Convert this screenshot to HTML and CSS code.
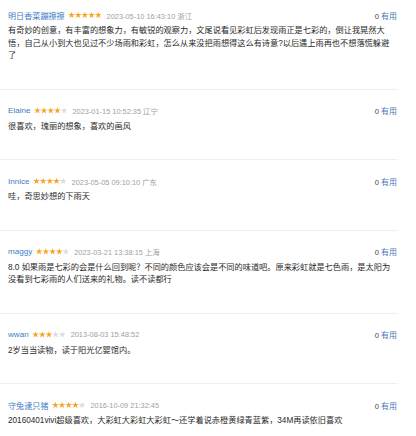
FILE: index.html
```html
<!DOCTYPE html>
<html>
<head>
    <meta charset="utf-8">
    <title>短评</title>
    <link rel="stylesheet" href="styles.css">
</head>
<body>

<div class="comments">
    <div class="comment first">
        <div class="comment-head">
            <span class="user">明日香菜蹦擦擦</span>
            <span class="stars"><i class="on"></i><i class="on"></i><i class="on"></i><i class="on"></i><i class="on"></i></span>
            <span class="meta">2023-05-10 16:43:10 浙江</span>
            <span class="votes">0 <em>有用</em></span>
        </div>
        <p class="comment-text">有奇妙的创意，有丰富的想象力，有敏锐的观察力，文尾说看见彩虹后发现雨正是七彩的，倒让我晃然大悟，自己从小到大也见过不少场雨和彩虹，怎么从来没把雨想得这么有诗意?以后遇上雨再也不想落慌躲避了</p>
    </div>

    <div class="comment">
        <div class="comment-head">
            <span class="user">Elaine</span>
            <span class="stars"><i class="on"></i><i class="on"></i><i class="on"></i><i class="on"></i><i></i></span>
            <span class="meta">2023-01-15 10:52:35 辽宁</span>
            <span class="votes">0 <em>有用</em></span>
        </div>
        <p class="comment-text">很喜欢，瑰丽的想象，喜欢的画风</p>
    </div>

    <div class="comment">
        <div class="comment-head">
            <span class="user">Innice</span>
            <span class="stars"><i class="on"></i><i class="on"></i><i class="on"></i><i class="on"></i><i></i></span>
            <span class="meta">2023-05-05 09:10:10 广东</span>
            <span class="votes">0 <em>有用</em></span>
        </div>
        <p class="comment-text">哇，奇思妙想的下雨天</p>
    </div>

    <div class="comment">
        <div class="comment-head">
            <span class="user">maggy</span>
            <span class="stars"><i class="on"></i><i class="on"></i><i class="on"></i><i class="on"></i><i></i></span>
            <span class="meta">2023-03-21 13:38:15 上海</span>
            <span class="votes">0 <em>有用</em></span>
        </div>
        <p class="comment-text">8.0 如果雨是七彩的会是什么回到呢？不同的颜色应该会是不同的味道吧。原来彩虹就是七色雨，是太阳为没看到七彩雨的人们送来的礼物。读不读都行</p>
    </div>

    <div class="comment">
        <div class="comment-head">
            <span class="user">wwan</span>
            <span class="stars"><i class="on"></i><i class="on"></i><i class="on"></i><i></i><i></i></span>
            <span class="meta">2013-08-03 15:48:52</span>
            <span class="votes">0 <em>有用</em></span>
        </div>
        <p class="comment-text">2岁当当读物，读于阳光亿婴馆内。</p>
    </div>

    <div class="comment">
        <div class="comment-head">
            <span class="user">守兔逮只猪</span>
            <span class="stars"><i class="on"></i><i class="on"></i><i class="on"></i><i class="on"></i><i></i></span>
            <span class="meta">2016-10-09 21:32:45</span>
            <span class="votes">0 <em>有用</em></span>
        </div>
        <p class="comment-text">20160401vivi超级喜欢，大彩虹大彩虹大彩虹～还学着说赤橙黄绿青蓝紫，34M再读依旧喜欢</p>
    </div>
</div>

</body>
</html>
```

FILE: styles.css
```css
* { margin: 0; padding: 0; box-sizing: border-box; }

body {
    font-family: "Liberation Sans", "Noto Sans CJK SC", sans-serif;
    background: #fff;
    color: #333;
}

/* list of short reviews */
.comments {
    width: 397px;
}

.comment {
    padding: 15px 0 26px;
    border-bottom: 1px solid #eeeeee;
}

.comment.first {
    padding-top: 9px;
}

.comment-head {
    display: flex;
    align-items: center;
    height: 12px;
    padding-left: 8px;
    white-space: nowrap;
}

.user {
    font-size: 8.1px;
    color: #3f7cc4;
}

.stars {
    display: flex;
    margin-left: 3.5px;
}

.stars i {
    display: block;
    width: 6.7px;
    height: 6.5px;
    background: #dcdcdc;
    clip-path: polygon(50% 0%, 62% 36%, 100% 36%, 69% 58%, 81% 95%, 50% 72%, 19% 95%, 31% 58%, 0% 36%, 38% 36%);
}

.stars i.on {
    background: #f7a52a;
}

.meta {
    font-size: 7.4px;
    color: #a0a0a0;
    margin-left: 5px;
}

.votes {
    margin-left: auto;
    font-size: 7.6px;
    color: #444;
}

.votes em {
    font-style: normal;
    font-size: 8px;
    color: #4a76b8;
}

.comment-text {
    margin-top: 4px;
    padding: 0 5px 0 8px;
    font-size: 8.2px;
    line-height: 12.5px;
    color: #2a2a2a;
}
```
